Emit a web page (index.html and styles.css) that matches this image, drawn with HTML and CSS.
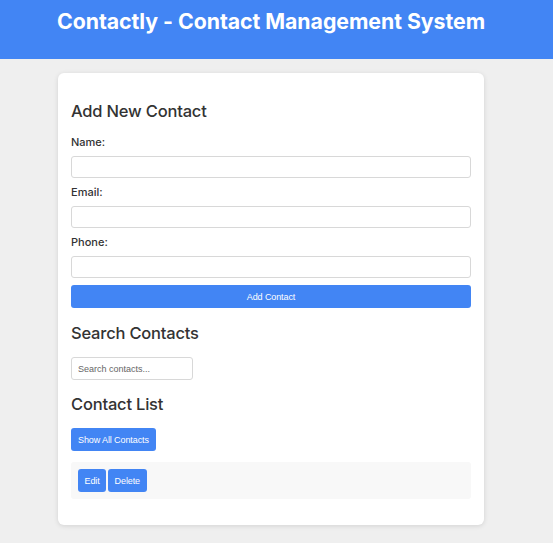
FILE: index.html
```html
<!DOCTYPE html>
<html lang="en">
<head>
<meta charset="utf-8">
<title>Contactly</title>
<link rel="stylesheet" href="styles.css">
</head>
<body>
<header class="site-header">
  <h1 class="site-title">Contactly - Contact Management System</h1>
</header>
<main class="card">
  <h2 class="section-title first">Add New Contact</h2>
  <form class="contact-form">
    <label class="field-label">Name:</label>
    <input class="text-input" type="text">
    <label class="field-label">Email:</label>
    <input class="text-input" type="email">
    <label class="field-label">Phone:</label>
    <input class="text-input" type="tel">
    <button class="btn btn-wide" type="button">Add Contact</button>
  </form>
  <h2 class="section-title search-title">Search Contacts</h2>
  <input class="search-input" type="text" placeholder="Search contacts...">
  <h2 class="section-title list-title">Contact List</h2>
  <div class="list-actions"><button class="btn" type="button">Show All Contacts</button></div>
  <div class="contact-item">
    <button class="btn btn-small" type="button">Edit</button>
    <button class="btn btn-small" type="button">Delete</button>
  </div>
</main>
</body>
</html>
```
FILE: styles.css
```css
* { box-sizing: border-box; }
html, body { margin: 0; padding: 0; }
body {
  background: #efefef;
  font-family: Inter, "Noto Sans", sans-serif;
  color: #333;
  height: 543px;
  overflow: hidden;
}
.site-header {
  background: #4285f4;
  height: 59px;
  padding: 8px 11px 0 0;
  display: flex;
  justify-content: center;
  align-items: flex-start;
}
.site-title {
  margin: 0;
  white-space: nowrap;
  color: #fff;
  font-size: 21.3px;
  font-weight: 700;
  line-height: 27px;
  letter-spacing: -0.05px;
}
.card {
  display: flex;
  flex-direction: column;
  align-items: flex-start;
  width: 426px;
  margin: 14px 0 0 58px;
  background: #fff;
  border-radius: 6px;
  box-shadow: 0 1px 5px rgba(0,0,0,0.12);
  padding: 13px 13px 13px;
}
.section-title {
  margin: 0;
  font-size: 16.5px;
  font-weight: 500;
  line-height: 24px;
  color: #333;
  letter-spacing: -0.2px;
}
.section-title.first { margin-top: 13px; }
.section-title.search-title { margin-top: 13px; }
.section-title.list-title { margin-top: 12px; }
.contact-form {
  display: flex;
  flex-direction: column;
  width: 100%;
}
.field-label {
  font-size: 11px;
  font-weight: 500;
  line-height: 14px;
  margin-top: 7px;
  margin-bottom: 7px;
  color: #333;
}
.contact-form .field-label:first-child { margin-top: 12px; }
.text-input {
  width: 100%;
  height: 22px;
  border: 1px solid #d8d8d8;
  border-radius: 3px;
  background: #fff;
  margin: 0;
}
.btn {
  background: #4285f4;
  color: #fff;
  border: none;
  border-radius: 3px;
  font-family: "Liberation Sans", Arial, sans-serif;
  font-size: 9px;
  letter-spacing: -0.1px;
  height: 23px;
  padding: 0 7px;
  cursor: pointer;
}
.btn-wide { width: 100%; margin-top: 7px; }
.search-input {
  width: 122px;
  height: 23px;
  margin-top: 12px;
  border: 1px solid #d8d8d8;
  border-radius: 3px;
  padding: 0 6px;
  font-family: "Liberation Sans", Arial, sans-serif;
  font-size: 9px;
  color: #333;
}
.search-input::placeholder { color: #666; }
.list-actions { margin-top: 12px; display: flex; }
.contact-item {
  width: 100%;
  margin-top: 11px;
  margin-bottom: 13px;
  background: #f8f8f8;
  border-radius: 3px;
  padding: 7px;
  display: flex;
  gap: 2px;
}
.btn-small { padding: 0 6.5px; }
```
